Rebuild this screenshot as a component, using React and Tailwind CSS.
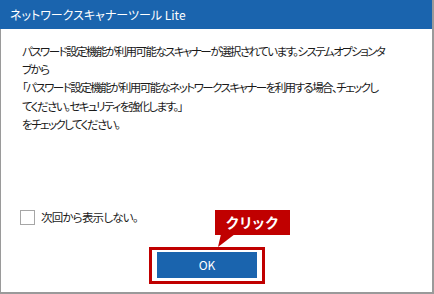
import { useState } from "react";

const font = "font-['Noto_Sans_CJK_JP','Noto_Sans',sans-serif] [font-feature-settings:'palt']";

const lines = [
  "パスワード設定機能が利用可能なスキャナーが選択されています。システムオプションタ",
  "ブから",
  "「パスワード設定機能が利用可能なネットワークスキャナーを利用する場合、チェックし",
  "てください。セキュリティを強化します。」",
  "をチェックしてください。",
];

export default function App() {
  const [dontShow, setDontShow] = useState(false);

  return (
    <div className={`w-[434px] h-[294px] flex flex-col bg-white border-r-2 border-[#9a9a9a] overflow-hidden ${font}`}>
      {/* Title Bar */}
      <div className="h-[29px] shrink-0 bg-[#1a64ae] flex items-center pl-[10px] text-white text-[12px]">
        ネットワークスキャナーツール Lite
      </div>

      {/* Body */}
      <div className="flex-1 flex flex-col border-l border-b-2 border-[#9a9a9a]">
        <div className="pl-[21px] pt-[13px] text-[11.5px] tracking-[-1.55px] leading-[18.2px] text-[#1a1a1a]">
          {lines.map((line, i) => (
            <div key={i} className="whitespace-nowrap">
              {line}
            </div>
          ))}
        </div>

        {/* Checkbox */}
        <label className="mt-[76px] ml-[19px] flex items-center gap-[6px] text-[11.5px] tracking-[-0.8px] text-[#1a1a1a] cursor-pointer">
          <span
            onClick={() => setDontShow(!dontShow)}
            className="w-[15px] h-[15px] border border-[#a6a6a6] bg-white flex items-center justify-center text-[10px]"
          >
            {dontShow ? "✓" : ""}
          </span>
          次回から表示しない。
        </label>

        {/* OK Button */}
        <div className="relative mt-[26px] ml-[156px] w-[100px]">
          <button className="w-[100px] h-[26px] bg-[#1a64ae] text-white text-[12px] flex items-center justify-center">
            OK
          </button>

          {/* Red frame annotation */}
          <div className="absolute left-[-8px] top-[-5px] w-[116px] h-[37px] border-[3px] border-[#c00000] pointer-events-none" />

          {/* Callout */}
          <div className="absolute left-[58px] top-[-42px] w-[75px] h-[25px] bg-[#c00000] text-white text-[14px] font-bold flex items-center justify-center tracking-[1px]">
            クリック
          </div>
          <svg className="absolute left-[58px] top-[-18px]" width="24" height="14" viewBox="0 0 24 14">
            <polygon points="6,0 20,0 3,13" fill="#c00000" />
          </svg>
        </div>
      </div>
    </div>
  );
}
